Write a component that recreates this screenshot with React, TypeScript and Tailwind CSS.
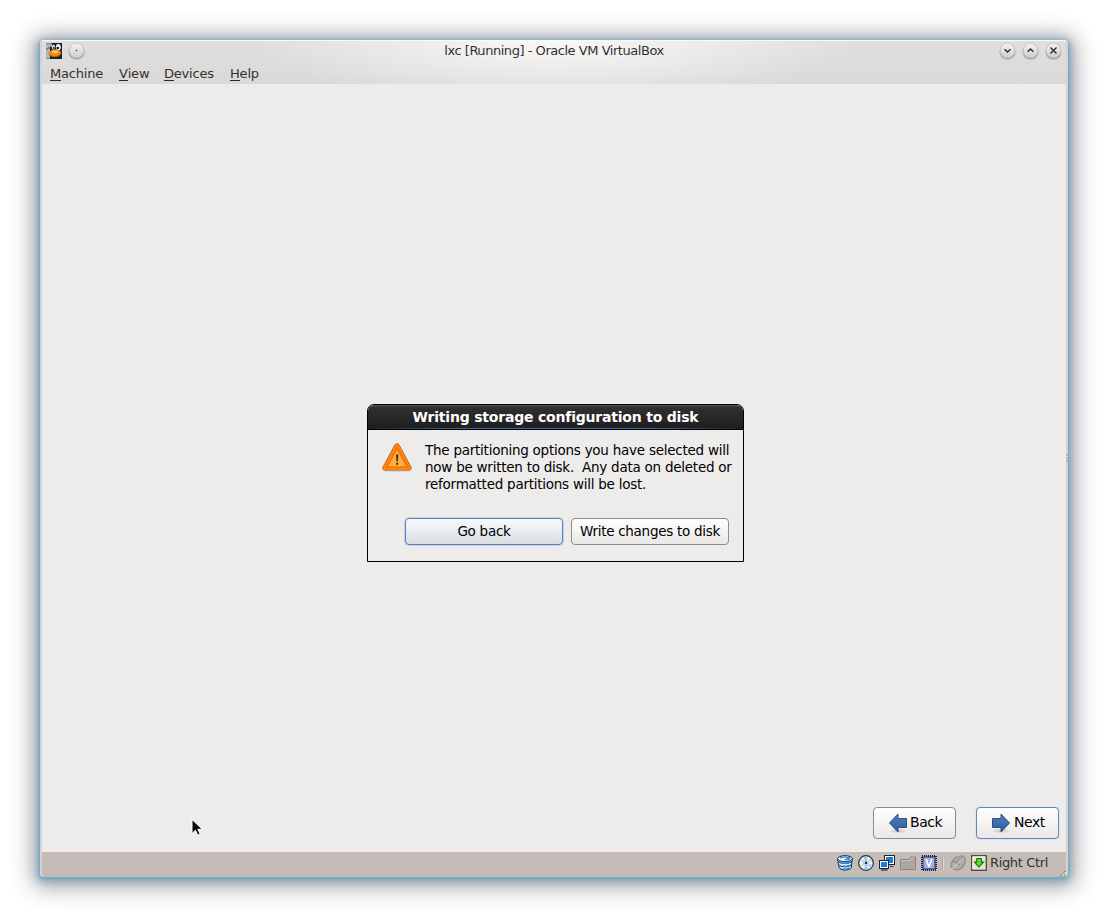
import type { ReactNode } from 'react';

const uiFont = "font-['DejaVu_Sans','Liberation_Sans',sans-serif]";

function AppIcon() {
  return (
    <svg width="16" height="16" viewBox="0 0 16 16">
      <rect width="16" height="16" fill="#1c2024" />
      <path d="M0 0h6v3H4v13H0z" fill="#7d858a" />
      <path d="M1 1v4M3 1v3M5 1v3M1 7v8M3 6v9" stroke="#e8eaeb" strokeWidth="1" />
      <ellipse cx="7.500" cy="4.300" rx="1.600" ry="2.800" fill="#d6d9dc" />
      <ellipse cx="12.300" cy="4.300" rx="2.400" ry="3.200" fill="#f4f5f6" />
      <circle cx="7.900" cy="5" r=".9" fill="#111" />
      <circle cx="11.800" cy="5" r="1.300" fill="#111" />
      <path d="M2.800 9C4 7.500 6.500 6.500 9 6.500s6 1 6 3.200-2.500 4.300-6 4.300S2 11.300 2.800 9z" fill="#f08a12" />
      <path d="M5.500 8.500c2-1.300 5-1.300 7 0-.6 2.400-6 2.600-7 0z" fill="#ffc95a" />
      <path d="M3 11.500c2 3 9 3.200 12-.8" stroke="#a84c05" strokeWidth="1" fill="none" />
    </svg>
  );
}

function RoundButton({ children }: { children: ReactNode }) {
  return (
    <span className="flex size-[15px] items-center justify-center rounded-full bg-linear-to-b from-[#f4f4f3] to-[#cfcdcb] shadow-[0_1px_1px_0.500px_#a3a19f,inset_0_0_0_0.500px_#b5b3b1]">
      <svg width="15" height="15" viewBox="0 0 15 15" fill="none" stroke="#2b2b2b" strokeWidth="1.400">
        {children}
      </svg>
    </span>
  );
}

function TitleBar() {
  return (
    <div className="flex h-[19px] items-center">
      <div className="flex w-[300px] items-center gap-[7px] pl-1">
        <AppIcon />
        <RoundButton>
          <circle cx="7.500" cy="7.500" r=".8" fill="#333" stroke="none" />
        </RoundButton>
      </div>
      <div className="flex-1 text-center text-[13px] leading-4 tracking-[-0.460px] whitespace-nowrap text-[#33312f]">
        lxc [Running] - Oracle VM VirtualBox
      </div>
      <div className="flex w-[300px] justify-end gap-2 pr-[5px]">
        <RoundButton><path d="M4.500 6.300l3 2.700 3-2.700" /></RoundButton>
        <RoundButton><path d="M4.500 8.700l3-2.700 3 2.700" /></RoundButton>
        <RoundButton><path d="M4.500 4.500l6 6M10.500 4.500l-6 6" /></RoundButton>
      </div>
    </div>
  );
}

function MenuItem({ mnemonic, rest, width }: { mnemonic: string; rest: string; width: string }) {
  return (
    <span className={width}>
      <span className="inline-block h-[15px] border-b border-[#2a2826]">{mnemonic}</span>
      {rest}
    </span>
  );
}

function MenuBar() {
  return (
    <div className="flex h-[24px] items-start pt-[6px] pl-2 text-[13px] leading-4 tracking-[-0.200px] whitespace-nowrap text-[#33312f]">
      <MenuItem mnemonic="M" rest="achine" width="w-[69px]" />
      <MenuItem mnemonic="V" rest="iew" width="w-[45px]" />
      <MenuItem mnemonic="D" rest="evices" width="w-[66px]" />
      <MenuItem mnemonic="H" rest="elp" width="w-[40px]" />
    </div>
  );
}

function WarningIcon() {
  return (
    <svg width="32" height="32" viewBox="0 0 32 32">
      <ellipse cx="16" cy="29.500" rx="14" ry="1.500" fill="#d9d7d5" />
      <path d="M16 2.700c1 0 1.700.5 2.200 1.400l11.800 22c.8 1.600 0 3-1.700 3H3.700c-1.700 0-2.500-1.400-1.700-3l11.800-22c.5-.9 1.200-1.400 2.200-1.400z" fill="#f57900" stroke="#cd5a1a" />
      <path d="M16 3.800c.6 0 1 .3 1.300.8L29 26.500c.5 1 .1 1.600-.8 1.600H3.800c-.9 0-1.300-.6-.8-1.600l11.700-21.900c.3-.5.700-.8 1.300-.8z" fill="none" stroke="#fba04a" strokeWidth=".8" />
      <path d="M16 9l8.800 16.300H7.200z" fill="#fcaf3e" />
      <path d="M15.100 13.500h2.200l-.5 7h-1.200z" fill="#222" />
      <circle cx="16.200" cy="22.800" r="1.100" fill="#222" />
    </svg>
  );
}

function Dialog() {
  return (
    <div className="flex h-[158px] w-[377px] flex-col overflow-hidden rounded-t-[7px] border border-black bg-[#edeceb]">
      <div className="h-[25px] border-b border-black bg-linear-to-b from-[#555] via-[#303030] via-10% to-[#1d1d1d]">
        <div className="flex h-[24px] items-center justify-center border-b pt-px text-[14px] leading-[17px] font-bold tracking-[-0.200px] whitespace-nowrap text-white [border-image:linear-gradient(to_right,#1d1d1d,#45699b_25%,#45699b_75%,#1d1d1d)_1]">
          Writing storage configuration to disk
        </div>
      </div>
      <div className="flex flex-1 pt-[11px] pl-[13px]">
        <WarningIcon />
        <p className="mt-px ml-3 text-[13.500px] leading-[17px] tracking-[-0.250px] whitespace-pre text-black">
          {'The partitioning options you have selected will\nnow be written to disk.  Any data on deleted or\nreformatted partitions will be lost.'}
        </p>
      </div>
      <div className="flex h-[43px] gap-2 pl-[37px] text-[13.500px] leading-[17px] tracking-[-0.280px] text-black">
        <button className="h-[27px] w-[158px] rounded-[4px] border border-[#5b80b2] bg-linear-to-b from-[#f8fafd] to-[#d8dde3] shadow-[0_0_0_1px_#c3d2e6]">Go back</button>
        <button className="h-[27px] w-[158px] rounded-[4px] border border-[#8f8c88] bg-linear-to-b from-white to-[#e9e8e6] whitespace-nowrap">Write changes to disk</button>
      </div>
    </div>
  );
}

function Arrow({ flip }: { flip?: boolean }) {
  return (
    <svg width="20" height="24" viewBox="0 0 20 24" className={flip ? '-scale-x-100' : ''}>
      <defs>
        <linearGradient id="arrowFill" x1="0" y1="0" x2="0" y2="1">
          <stop offset="0" stopColor="#537fb9" />
          <stop offset="1" stopColor="#2f5e9f" />
        </linearGradient>
        <radialGradient id="arrowShade">
          <stop offset="0" stopColor="#bcbcbc" />
          <stop offset="1" stopColor="#bcbcbc" stopOpacity="0" />
        </radialGradient>
      </defs>
      <ellipse cx="10" cy="20" rx="9" ry="2.500" fill="url(#arrowShade)" />
      <path d="M1.500 7.500H10V3l8.500 9-8.500 9v-4.500H1.500z" fill="url(#arrowFill)" stroke="#28518c" />
    </svg>
  );
}

function StatusIcons() {
  return (
    <div className="flex items-center gap-[5px]">
      <svg width="16" height="16" viewBox="0 0 16 16">
        <path d="M2 9.500v3c1.500 3.300 10.500 3.300 12.500 0v-3z" fill="#b5dcf8" stroke="#0d2b4c" />
        <path d="M1.200 6v3c1.500 3.600 12 3.600 13.600 0V6z" fill="#d5edfc" stroke="#0d2b4c" />
        <path d="M.7 3.500v2c1.200 4 13.400 4 14.600 0v-2z" fill="#b5dcf8" stroke="#0d2b4c" />
        <ellipse cx="8" cy="3.700" rx="7.300" ry="3" fill="#eef8ff" stroke="#0d2b4c" />
        <path d="M3 3.200c2-1.300 7-1.500 9.500-.3L9 4.500c2 .3 3 .2 4-.3" fill="none" stroke="#2f8add" strokeWidth="1.300" />
        <path d="M6 8c2 .4 5 .2 7-.8M6 11c2 .4 5 .2 7-.8M6 14c2 .3 4.500.2 6.500-.8" fill="none" stroke="#2f8add" strokeWidth="1.300" />
      </svg>
      <svg width="16" height="16" viewBox="0 0 16 16">
        <circle cx="8" cy="8" r="7.300" fill="#e8f4fb" stroke="#1b3450" strokeWidth="1.200" />
        <path d="M8 8L5.500 2h4z" fill="#9ec9f0" />
        <path d="M8 8l4.500-4.500 1.500 2.500z" fill="#b9df9d" />
        <path d="M8 8L3.500 3.500 2 6z" fill="#d5c4f5" />
        <path d="M8 8l4.500 4.500L14 10z" fill="#c9b4f1" />
        <path d="M8 8l-4.500 4.500L2 10z" fill="#d8ec9a" />
        <path d="M8 8l-2 6h4z" fill="#8ed4ee" />
        <circle cx="8" cy="8" r="2.700" fill="#fff" stroke="#9bb5ca" strokeWidth=".7" />
        <circle cx="8" cy="8" r="1.400" fill="#112f50" />
      </svg>
      <svg width="16" height="16" viewBox="0 0 16 16">
        <rect x="5.500" y=".5" width="10" height="9" fill="#fff" stroke="#222" />
        <rect x="7" y="2" width="7" height="6" fill="#137ee8" />
        <path d="M11 11.500h3.500" stroke="#333" />
        <rect x=".5" y="5.500" width="9" height="8" fill="#fff" stroke="#222" />
        <rect x="2" y="7" width="6" height="5" fill="#137ee8" />
        <path d="M2 15h6.500" stroke="#333" strokeWidth="1.300" />
      </svg>
      <svg width="16" height="16" viewBox="0 0 16 16">
        <path d="M.5 4.500h8.500l1.500-2.500h5v12.500H.5z" fill="#aca6a3" stroke="#898481" />
        <path d="M1.500 5.500H10l1.300-2.500h3.200" fill="none" stroke="#ccc6c3" />
      </svg>
      <svg width="16" height="16" viewBox="0 0 16 16">
        <rect x="1" y="1" width="14" height="14" fill="none" stroke="#16204a" strokeWidth="2" strokeDasharray="1 1" />
        <rect x="2" y="2" width="12" height="12" rx="1" fill="#a3abe3" stroke="#262e66" />
        <path d="M5.200 4l2.500 7.500h.6L10.800 4" fill="none" stroke="#fff" strokeWidth="1.500" />
      </svg>
      <span className="mr-px h-[13px] w-[2px] border-r border-[#dbd6d3] bg-[#aaa39f]" />
      <svg width="16" height="16" viewBox="0 0 16 16">
        <path d="M2 7C4 3 8 .8 12 1c3 .2 3.800 3 3 6-1 4-4 7.500-8 7.800C2 15-.3 11 2 7z" fill="#b5afab" stroke="#8f8986" strokeWidth="1.200" />
        <path d="M3 6.500c3 0 5 1.500 7 4M14 3C9 3 7 5 6.300 7.500" fill="none" stroke="#8d8783" strokeWidth="1.200" />
        <path d="M1 15L14.500 2" stroke="#d6d0cd" />
      </svg>
      <svg width="16" height="16" viewBox="0 0 16 16">
        <rect x=".7" y=".7" width="14.600" height="14.600" fill="#e4e5cd" stroke="#4c4a3b" strokeWidth="1.300" />
        <path d="M2 14V2h12" fill="none" stroke="#fff" />
        <path d="M5.800 3.500h4.400V7h2.300L8 12 3.500 7h2.300z" fill="#56e334" stroke="#16670f" strokeWidth="1.100" />
      </svg>
    </div>
  );
}

function StatusBar() {
  return (
    <div className="relative flex h-[25px] items-start justify-end bg-[#c5bbb7] pt-[3px] pr-[18px]">
      <StatusIcons />
      <span className="ml-[3px] w-[58px] text-[13px] leading-4 tracking-[-0.350px] whitespace-nowrap text-[#33312f]">Right Ctrl</span>
      <svg className="absolute right-0 bottom-0" width="6" height="6" viewBox="0 0 6 6">
        <path d="M4 0h1.500v1.500H4zM2 2h1.500v1.500H2zM4 4h1.500v1.500H4zM0 4h1.500v1.500H0z" fill="#8d8582" />
        <path d="M5 1h1v1H5zM3 3h1v1H3zM5 5h1v1H5z" fill="#fff" />
      </svg>
    </div>
  );
}

export default function App() {
  return (
    <div className={`h-[917px] w-[1108px] overflow-hidden bg-white p-10 ${uiFont}`}>
      <div className="relative h-[837px] w-[1028px] rounded-[4px] shadow-[0_1px_2px_1px_#74a9c6,0_2px_7px_3px_rgba(90,145,175,0.500),0_3px_22px_7px_rgba(50,52,62,0.450)]">
        <div className="flex h-full flex-col overflow-hidden rounded-[4px] border-x-2 border-x-[#d5d4d3] border-t border-t-[#f8fafa] bg-[radial-gradient(ellipse_300px_65px_at_512px_0px,#f8f8f7,transparent),linear-gradient(to_bottom,#e0dfde,#dbd9d7_44px)] bg-no-repeat">
          <TitleBar />
          <MenuBar />
          <main className="flex h-[768px] flex-col bg-[#edeceb]">
            <div className="flex h-[478px] items-end pl-[325px]">
              <Dialog />
            </div>
            <div className="flex flex-1 items-end justify-end gap-5 pr-[7px] pb-[13px] text-[14px] leading-[17px] tracking-[-0.450px] text-black">
              <button className="flex h-8 w-[83px] items-center rounded-[4px] border border-[#8f8c88] bg-linear-to-b from-white to-[#e9e8e6] pl-3.5">
                <Arrow flip />
                <span className="ml-0.5 pb-px">Back</span>
              </button>
              <button className="flex h-8 w-[83px] items-center rounded-[4px] border border-[#6287bb] bg-linear-to-b from-white to-[#e9e8e6] pl-3.5 shadow-[0_0_1px_#7aa0d0]">
                <Arrow />
                <span className="ml-[3px] pb-px">Next</span>
              </button>
            </div>
          </main>
          <StatusBar />
        </div>
        <svg className="absolute top-[778px] left-[151px]" width="14" height="20" viewBox="0 0 14 20">
          <path d="M1 1.500v14l3.400-3.300 2.500 5 2.300-1-2.400-4.900h4.500z" fill="#000" stroke="#fff" />
        </svg>
        <svg className="absolute top-[414px] right-0" width="2" height="10" viewBox="0 0 2 10">
          <path d="M0 1h2M0 4h2M0 7h2" stroke="#9c9a98" />
        </svg>
      </div>
    </div>
  );
}
